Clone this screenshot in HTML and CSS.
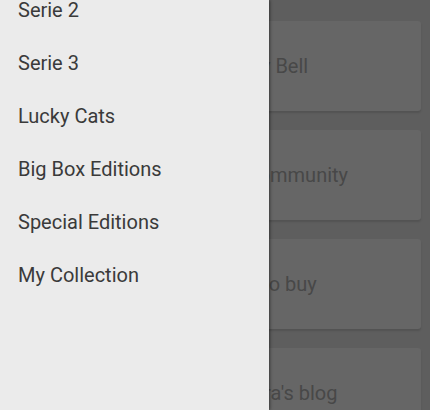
FILE: index.html
```html
<!DOCTYPE html>
<html lang="en">
<head>
  <meta charset="UTF-8" />
  <title>Collection</title>
  <meta name="viewport" content="width=device-width, initial-scale=1.0" />
  <link rel="stylesheet" href="styles.css">
</head>
<body>
  <div class="content">
    <div class="card"><span class="thumb"></span><span class="card-title">Lucky Bell</span></div>
    <div class="card"><span class="thumb"></span><span class="card-title">La Community</span></div>
    <div class="card"><span class="thumb"></span><span class="card-title">Tips to buy</span></div>
    <div class="card"><span class="thumb"></span><span class="card-title">Sandra's blog</span></div>
  </div>

  <!-- drawer -->
  <nav class="drawer">
    <ul class="menu">
      <li>Serie 2</li>
      <li>Serie 3</li>
      <li>Lucky Cats</li>
      <li>Big Box Editions</li>
      <li>Special Editions</li>
      <li>My Collection</li>
    </ul>
  </nav>
</body>
</html>
```

FILE: styles.css
```css
:root {
  --scrim-bg: #5e5e5e;
  --card: #666666;
  --card-text: #484848;
  --drawer: #ebebeb;
  --drawer-text: #3a3a3a;
}

html, body {
  height: 100%;
}

body {
  font-family: Roboto, "Noto Sans", sans-serif;
  font-size: 20px;
  background-color: var(--scrim-bg);
  margin: 0;
  padding: 0;
  overflow: hidden;
}

.content {
  display: flex;
  flex-direction: column;
  gap: 19px;
  padding: 21px 9px 0 9px;
}

.card {
  display: flex;
  align-items: center;
  height: 90px;
  flex-shrink: 0;
  background-color: var(--card);
  border-radius: 3px;
  box-shadow: 0 2px 2px rgba(0, 0, 0, 0.12);
  color: var(--card-text);
}

.thumb {
  width: 190px;
  height: 70px;
  margin: 0 20px 0 0;
}

.drawer {
  position: absolute;
  top: 0;
  left: 0;
  bottom: 0;
  width: 269px;
  background-color: var(--drawer);
  box-shadow: 1px 0 3px rgba(0, 0, 0, 0.45);
  overflow: hidden;
}

.menu {
  list-style: none;
  margin: -16px 0 0 0;
  padding: 0;
}

.menu li {
  height: 53px;
  line-height: 53px;
  padding-left: 18px;
  color: var(--drawer-text);
}
```
